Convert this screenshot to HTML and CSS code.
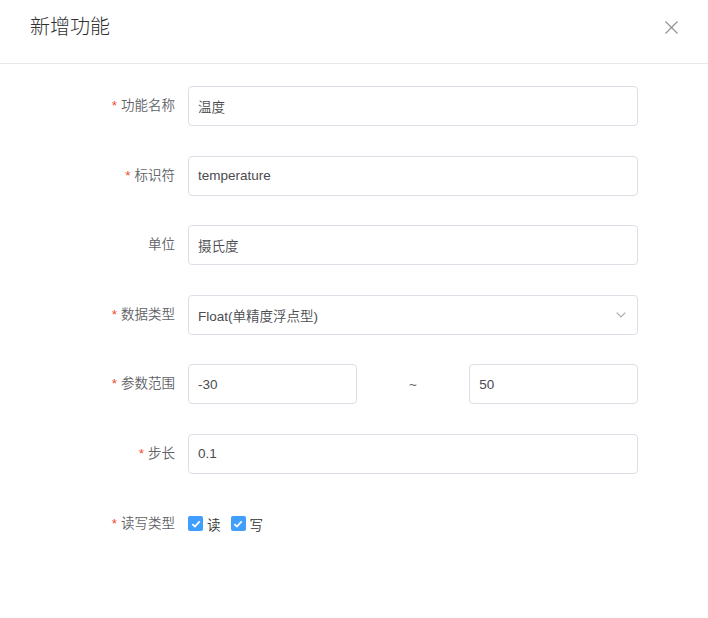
FILE: index.html
```html
<!DOCTYPE html>
<html lang="zh-CN">
<head>
    <meta charset="UTF-8">
    <meta name="viewport" content="width=device-width, initial-scale=1.0">
    <title>新增功能</title>
    <link rel="stylesheet" href="styles.css">
</head>
<body>
    <div class="dialog">
        <div class="dialog-header">
            <span class="dialog-title">新增功能</span>
            <button class="dialog-close" aria-label="关闭">
                <svg width="13" height="13" viewBox="0 0 13 13">
                    <path d="M0.5 0.5 L12.5 12.5 M12.5 0.5 L0.5 12.5" stroke="#909399" stroke-width="1.2" fill="none"/>
                </svg>
            </button>
        </div>

        <form class="form">
            <div class="form-item">
                <label class="form-label required">功能名称</label>
                <div class="form-field">
                    <input class="input" type="text" value="温度">
                </div>
            </div>

            <div class="form-item">
                <label class="form-label required">标识符</label>
                <div class="form-field">
                    <input class="input" type="text" value="temperature">
                </div>
            </div>

            <div class="form-item">
                <label class="form-label">单位</label>
                <div class="form-field">
                    <input class="input" type="text" value="摄氏度">
                </div>
            </div>

            <div class="form-item">
                <label class="form-label required">数据类型</label>
                <div class="form-field">
                    <div class="select">
                        <span class="select-value">Float(单精度浮点型)</span>
                        <svg class="select-arrow" width="10" height="6" viewBox="0 0 10 6">
                            <path d="M0.7 0.7 L5 5 L9.3 0.7" stroke="#a8abb2" stroke-width="1.2" fill="none"/>
                        </svg>
                    </div>
                </div>
            </div>

            <div class="form-item">
                <label class="form-label required">参数范围</label>
                <div class="form-field range">
                    <input class="input" type="text" value="-30">
                    <span class="range-sep">~</span>
                    <input class="input" type="text" value="50">
                </div>
            </div>

            <div class="form-item">
                <label class="form-label required">步长</label>
                <div class="form-field">
                    <input class="input" type="text" value="0.1">
                </div>
            </div>

            <div class="form-item">
                <label class="form-label required">读写类型</label>
                <div class="form-field checks">
                    <label class="checkbox">
                        <span class="checkbox-box">
                            <svg width="10" height="8" viewBox="0 0 10 8">
                                <path d="M1.3 4.2 L3.9 6.6 L8.7 1.4" stroke="#fff" stroke-width="1.8" fill="none"/>
                            </svg>
                        </span>
                        <span class="checkbox-text">读</span>
                    </label>
                    <label class="checkbox">
                        <span class="checkbox-box">
                            <svg width="10" height="8" viewBox="0 0 10 8">
                                <path d="M1.3 4.2 L3.9 6.6 L8.7 1.4" stroke="#fff" stroke-width="1.8" fill="none"/>
                            </svg>
                        </span>
                        <span class="checkbox-text">写</span>
                    </label>
                </div>
            </div>
        </form>
    </div>
</body>
</html>
```

FILE: styles.css
```css
* {
    margin: 0;
    padding: 0;
    box-sizing: border-box;
}

body {
    font-family: "Liberation Sans", "Noto Sans CJK SC", sans-serif;
    font-weight: 350;
    background: #fff;
    color: #606266;
    width: 708px;
    height: 618px;
    overflow: hidden;
}

.dialog-header {
    display: flex;
    justify-content: space-between;
    align-items: center;
    padding: 17px 30px 26px;
    border-bottom: 1px solid #e8e8e8;
}

.dialog-title {
    font-size: 20px;
    line-height: 20px;
    font-weight: 300;
    color: #303133;
}

.dialog-close {
    border: none;
    background: none;
    width: 13px;
    height: 13px;
    display: flex;
    cursor: pointer;
}

.form {
    padding: 22px 0 0 88px;
}

.form-item {
    display: flex;
    margin-bottom: 29.6px;
}

.form-label {
    width: 100px;
    padding-right: 13px;
    text-align: right;
    font-size: 13.5px;
    line-height: 40px;
    color: #606266;
}

.form-label.required::before {
    content: "*";
    color: #f5472d;
    margin-right: 4px;
}

.form-field {
    width: 450px;
}

.input,
.select {
    width: 100%;
    height: 40px;
    border: 1px solid #dcdfe6;
    border-radius: 4px;
    padding: 0 9px;
    font-family: inherit;
    font-weight: inherit;
    font-size: 13.5px;
    color: #4a4c50;
    background: #fff;
    outline: none;
}

.select {
    display: flex;
    align-items: center;
    justify-content: space-between;
    padding-right: 11px;
}

.range {
    display: flex;
    align-items: center;
}

.range .input {
    width: 168.75px;
}

.range-sep {
    width: 112.5px;
    text-align: center;
    font-size: 13.5px;
    color: #606266;
}

.checks {
    display: flex;
    align-items: center;
    gap: 10px;
}

.checkbox {
    display: flex;
    align-items: center;
    gap: 4px;
    cursor: pointer;
}

.checkbox-box {
    width: 15px;
    height: 15px;
    border-radius: 2px;
    background: #409eff;
    display: flex;
    align-items: center;
    justify-content: center;
}

.checkbox-text {
    font-size: 13.5px;
    color: #303133;
}
```
